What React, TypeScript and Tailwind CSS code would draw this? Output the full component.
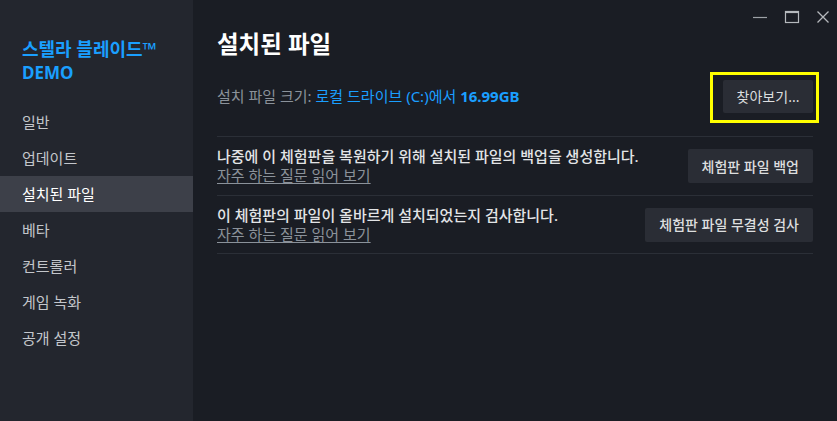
import React from "react";

const font = { fontFamily: '"Noto Sans", "Noto Sans CJK KR", sans-serif' };

const navItems = ["일반", "업데이트", "설치된 파일", "베타", "컨트롤러", "게임 녹화", "공개 설정"];

function WindowControls() {
  return (
    <div className="absolute top-0 right-0 flex items-start">
      <svg className="absolute" style={{ left: -85, top: 10 }} width="16" height="14" viewBox="0 0 16 14">
        <line x1="1" y1="7.5" x2="15" y2="7.5" stroke="#9da1a6" strokeWidth="1.2" />
      </svg>
      <svg className="absolute" style={{ left: -53, top: 10 }} width="16" height="14" viewBox="0 0 16 14">
        <rect x="1.5" y="1.5" width="13" height="11" fill="none" stroke="#b5b9bd" strokeWidth="1.2" />
        <line x1="1.5" y1="2.3" x2="14.5" y2="2.3" stroke="#b5b9bd" strokeWidth="1.6" />
      </svg>
      <svg className="absolute" style={{ left: -21, top: 10 }} width="14" height="14" viewBox="0 0 14 14">
        <path d="M1.5 1.5 L12.5 12.5 M12.5 1.5 L1.5 12.5" stroke="#b5b9bd" strokeWidth="1.3" />
      </svg>
    </div>
  );
}

export default function App() {
  return (
    <div className="flex h-[421px] w-[837px] overflow-hidden bg-[#1a1d24]" style={font}>
      <aside className="w-[193px] shrink-0 bg-[#23262e] pt-[37px]">
        <div className="px-[22px] font-bold leading-[24px] text-[#1a9fff]">
          <div className="text-[18px]">스텔라 블레이드™</div>
          <div className="text-[17px]">DEMO</div>
        </div>
        <nav className="mt-[19px]">
          {navItems.map((item) => (
            <div
              key={item}
              className={
                item === "설치된 파일"
                  ? "flex h-[36px] items-center bg-[#3d4049] px-[22px] text-[15px] text-white"
                  : "flex h-[36px] items-center px-[22px] text-[15px] text-[#c3c6cb]"
              }
            >
              {item}
            </div>
          ))}
        </nav>
      </aside>

      <main className="relative flex-1 px-[24px] pt-[29px]">
        <div className="absolute right-0 top-0 h-[30px] w-0">
          <WindowControls />
        </div>

        <h1 className="h-[30px] text-[23.5px] font-bold leading-[30px] text-white">설치된 파일</h1>

        <div className="mt-[21px] flex h-[33px] items-center justify-between">
          <div className="text-[15px] text-[#8b929a]">
            설치 파일 크기: <span className="text-[#1a9fff]">로컬 드라이브 (C:)에서 <span className="font-bold">16.99GB</span></span>
          </div>
          <div className="relative">
            <button className="h-[33px] w-[90px] rounded-[2px] bg-[#2a2d35] text-[14px] text-[#dcdedf]">찾아보기...</button>
            <div className="pointer-events-none absolute left-[-13px] top-[-8px] h-[51px] w-[109px] border-[3px] border-[#ffff00]" />
          </div>
        </div>

        <div className="mt-[23px] border-t border-[#2b2f37]">
          <div className="flex h-[59px] items-center justify-between border-b border-[#2b2f37]">
            <div className="text-[15px] leading-[19px]">
              <div className="font-medium text-[#e2e4e6]">나중에 이 체험판을 복원하기 위해 설치된 파일의 백업을 생성합니다.</div>
              <div className="text-[#8b929a] underline underline-offset-2">자주 하는 질문 읽어 보기</div>
            </div>
            <button className="h-[34px] rounded-[2px] bg-[#2a2d35] px-[14px] text-[14px] font-medium text-[#dcdedf]">체험판 파일 백업</button>
          </div>
          <div className="flex h-[58px] items-center justify-between border-b border-[#2b2f37]">
            <div className="text-[15px] leading-[19px]">
              <div className="font-medium text-[#e2e4e6]">이 체험판의 파일이 올바르게 설치되었는지 검사합니다.</div>
              <div className="text-[#8b929a] underline underline-offset-2">자주 하는 질문 읽어 보기</div>
            </div>
            <button className="h-[34px] rounded-[2px] bg-[#2a2d35] px-[14px] text-[14px] font-medium text-[#dcdedf]">체험판 파일 무결성 검사</button>
          </div>
        </div>
      </main>
    </div>
  );
}
